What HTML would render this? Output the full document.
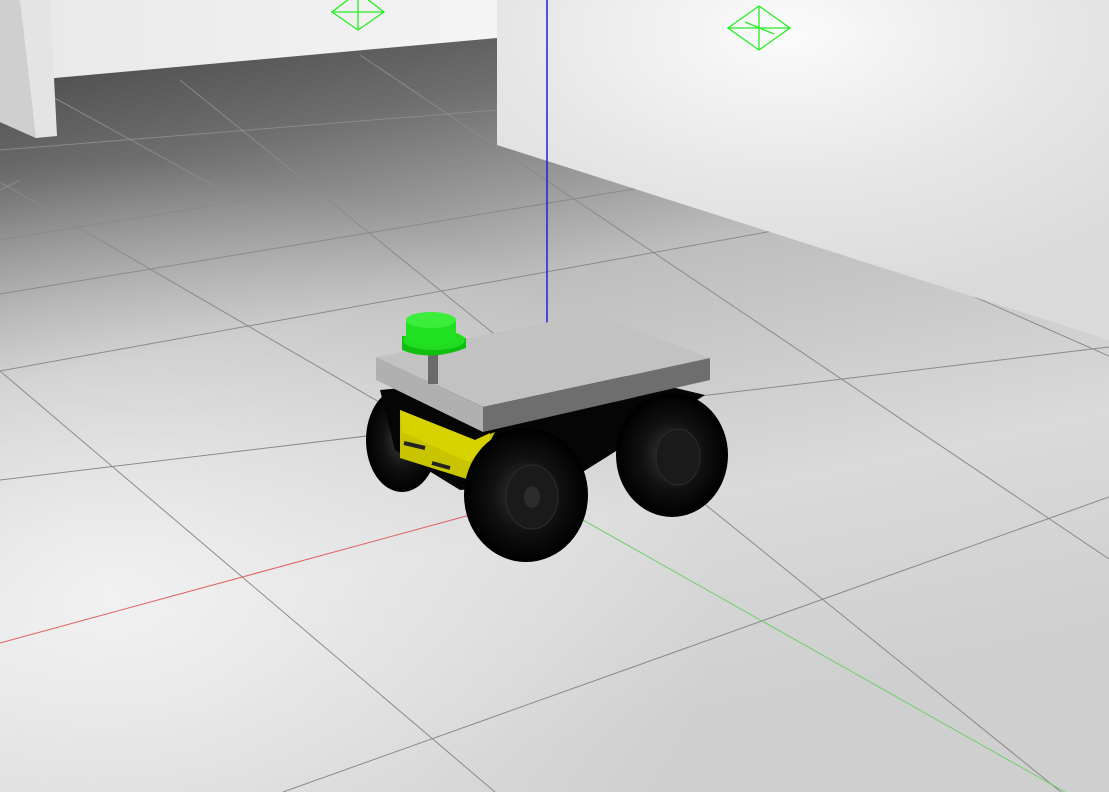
<!DOCTYPE html>
<html><head><meta charset="utf-8"><style>html,body{margin:0;padding:0;overflow:hidden;background:#888}svg{display:block}</style></head>
<body>
<svg width="1109" height="792" viewBox="0 0 1109 792" xmlns="http://www.w3.org/2000/svg">
<defs>
<linearGradient id="floor" x1="0" y1="0" x2="0.3" y2="1">
<stop offset="0" stop-color="#3a3a3a"/>
<stop offset="0.22" stop-color="#6e6e6e"/>
<stop offset="0.45" stop-color="#bdbdbd"/>
<stop offset="0.75" stop-color="#dadada"/>
<stop offset="1" stop-color="#cfcfcf"/>
</linearGradient>
<radialGradient id="spot" cx="0.1" cy="0.75" r="0.55">
<stop offset="0" stop-color="#f6f6f6" stop-opacity="0.85"/>
<stop offset="1" stop-color="#f2f2f2" stop-opacity="0"/>
</radialGradient>
<radialGradient id="wall" cx="0.47" cy="0.1" r="0.8">
<stop offset="0" stop-color="#fbfbfb"/>
<stop offset="0.5" stop-color="#e8e8e8"/>
<stop offset="1" stop-color="#dadada"/>
</radialGradient>
<linearGradient id="backwall" x1="0" y1="0" x2="1" y2="0">
<stop offset="0" stop-color="#e8e8e8"/><stop offset="1" stop-color="#f4f4f4"/>
</linearGradient>
<radialGradient id="tire" cx="0.5" cy="0.5" r="0.5">
<stop offset="0" stop-color="#3a3a3a"/><stop offset="0.55" stop-color="#111"/><stop offset="1" stop-color="#000"/>
</radialGradient>
</defs>
<rect width="1109" height="792" fill="url(#floor)"/>
<rect width="1109" height="792" fill="url(#spot)"/>
<!-- grid lines -->
<g stroke="#8a8a8a" stroke-width="1" fill="none">
<line x1="0" y1="371" x2="495" y2="792"/>
<line x1="0" y1="182" x2="560" y2="507"/>
<line x1="360" y1="55" x2="1109" y2="559"/>
<line x1="700" y1="176" x2="1109" y2="356"/>
<line x1="180" y1="80" x2="1061" y2="792"/>
<line x1="40" y1="90" x2="240" y2="200"/>
<line x1="0" y1="240" x2="497" y2="160"/>
<line x1="0" y1="294" x2="700" y2="178"/>
<line x1="0" y1="371" x2="1109" y2="170"/>
<line x1="0" y1="480" x2="1109" y2="347"/>
<line x1="283" y1="792" x2="1109" y2="497"/>
<line x1="0" y1="150" x2="497" y2="110"/>
<line x1="0" y1="190" x2="20" y2="180"/>
</g>
<!-- back wall -->
<polygon points="0,0 497,0 497,38 55,78 0,85" fill="url(#backwall)"/>
<!-- pillar -->
<polygon points="0,0 50,0 57,136 36,138 0,122" fill="#e4e4e4"/>
<polygon points="0,0 20,0 36,138 0,122" fill="#cfcfcf"/>
<!-- right wall -->
<polygon points="497,0 1109,0 1109,340 497,145" fill="url(#wall)"/>
<line x1="0" y1="643" x2="470" y2="515" stroke="#e06060" stroke-width="1"/>
<line x1="560" y1="507" x2="1065" y2="792" stroke="#6cd06c" stroke-width="1"/>
<line x1="547" y1="0" x2="547" y2="357" stroke="#2020e0" stroke-width="1.5"/>
<!-- diamonds -->
<g stroke="#22ee22" stroke-width="1.3" fill="none">
<polygon points="358,-8 384,12 358,30 332,12"/><line x1="332" y1="12" x2="384" y2="12"/><line x1="358" y1="-8" x2="358" y2="30"/>
<polygon points="759,6 790,28 759,50 728,28"/><line x1="728" y1="28" x2="790" y2="28"/><line x1="759" y1="6" x2="759" y2="50"/><line x1="745" y1="22" x2="774" y2="34"/>
</g>
<!-- robot -->
<ellipse cx="402" cy="440" rx="36" ry="52" fill="url(#tire)"/>
<polygon points="380,390 600,370 705,395 570,480 460,490 395,450" fill="#050505"/>
<polygon points="400,410 475,440 495,432 470,480 400,458" fill="#c8c400"/>
<polygon points="400,410 475,440 490,433 488,450 468,462 402,432" fill="#d6d200"/>
<line x1="404" y1="443" x2="425" y2="448" stroke="#222" stroke-width="4"/>
<line x1="432" y1="463" x2="450" y2="468" stroke="#222" stroke-width="4"/>
<ellipse cx="672" cy="455" rx="56" ry="62" fill="url(#tire)"/>
<ellipse cx="678" cy="457" rx="22" ry="28" fill="#1a1a1a" stroke="#2c2c2c"/>
<ellipse cx="526" cy="495" rx="62" ry="67" fill="url(#tire)"/>
<ellipse cx="532" cy="497" rx="26" ry="32" fill="#1a1a1a" stroke="#2c2c2c"/>
<ellipse cx="532" cy="497" rx="8" ry="11" fill="#2c2c2c"/>
<!-- plate -->
<polygon points="376,357 593,313 710,358 483,407" fill="#c2c2c2"/>
<polygon points="376,357 483,407 483,432 376,380" fill="#b0b0b0"/>
<polygon points="483,407 710,358 710,380 483,432" fill="#6e6e6e"/>
<!-- lidar -->
<rect x="428" y="352" width="10" height="32" fill="#6a6a6a"/>
<path d="M402,336 L402,350 Q430,362 466,348 L466,338 Z" fill="#10c010"/>
<ellipse cx="434" cy="340" rx="31" ry="10" fill="#20dd20"/>
<path d="M406,320 L406,340 Q430,352 456,340 L456,320 Z" fill="#22e022"/>
<ellipse cx="431" cy="320" rx="25" ry="8" fill="#3cee3c"/>
</svg>
</body></html>
